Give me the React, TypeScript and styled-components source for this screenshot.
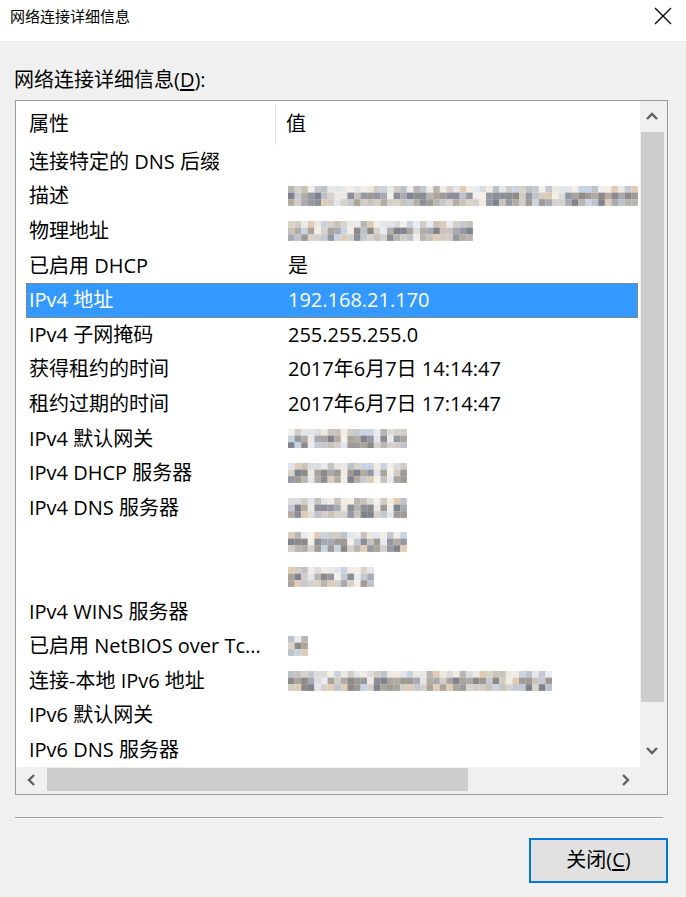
import React from "react";
import styled, { createGlobalStyle } from "styled-components";

const Global = createGlobalStyle`
  html, body { margin: 0; padding: 0; background: #f0f0f0; }
  body { font-family: "Open Sans", "Noto Sans CJK SC", sans-serif; }
  * { box-sizing: border-box; }
`;

const FONT = `"Open Sans", "Noto Sans CJK SC", sans-serif`;

const Window = styled.div`
  width: 686px;
  height: 897px;
  display: flex;
  flex-direction: column;
  background: #f0f0f0;
  overflow: hidden;
`;

const TitleBar = styled.div`
  height: 41px;
  flex: none;
  background: #ffffff;
  display: flex;
  align-items: flex-start;
  justify-content: space-between;
  padding: 5px 14px 0 10px;
`;

const Title = styled.div`
  font-family: ${FONT};
  font-size: 15px;
  line-height: 22px;
  color: #000;
`;

const CloseBtn = styled.div`
  width: 18px;
  height: 18px;
  margin-top: 2px;
  display: flex;
`;

const Body = styled.div`
  flex: 1;
  display: flex;
  flex-direction: column;
  padding: 27px 18px 0 15px;
`;

const Label = styled.div`
  font-family: ${FONT};
  font-size: 20px;
  line-height: 24px;
  color: #000;
  height: 24px;
  margin-left: -1px;
  u { text-decoration: underline; text-underline-offset: 2px; }
`;

const ListBox = styled.div`
  margin-top: 8px;
  height: 695px;
  border: 1px solid #9a9a9a;
  background: #fff;
  display: grid;
  grid-template-columns: 1fr 27px;
  grid-template-rows: 1fr 27px;
`;

const Viewport = styled.div`
  overflow: hidden;
  background: #fff;
  display: flex;
  flex-direction: column;
`;

const HeaderRow = styled.div`
  height: 44px;
  flex: none;
  display: grid;
  grid-template-columns: 260px 1fr;
  font-family: ${FONT};
  font-size: 20px;
  line-height: 24px;
  color: #000;
`;

const HeaderCell = styled.div<{ $divider?: boolean }>`
  display: flex;
  align-items: center;
  padding: 0 0 1px 13px;
  margin: 3px 0 0;
  border-right: ${(p) => (p.$divider ? "1px solid #e5e5e5" : "none")};
  &:nth-child(2) { padding-left: 10px; }
`;

const Row = styled.div<{ $selected?: boolean }>`
  height: 34.6px;
  flex: none;
  display: grid;
  grid-template-columns: 261px 1fr;
  align-items: center;
  font-family: ${FONT};
  font-size: 20px;
  line-height: 24px;
  white-space: nowrap;
  color: ${(p) => (p.$selected ? "#fff" : "#000")};
  background: ${(p) => (p.$selected ? "#3399ff" : "transparent")};
  border: 1px dotted ${(p) => (p.$selected ? "#c4742c" : "transparent")};
  margin: 0 2px 0 10px;
  padding-bottom: 1px;
`;

const Cell = styled.div`
  padding-left: 2px;
  display: flex;
  align-items: center;
`;

const ValueCell = styled(Cell)`
  padding-left: 0;
  min-width: 0;
`;

const VScroll = styled.div`
  background: #f0f0f0;
  display: flex;
  flex-direction: column;
`;

const VArrow = styled.div<{ $h: number }>`
  height: ${(p) => p.$h}px;
  flex: none;
  display: flex;
  align-items: center;
  justify-content: center;
  padding-right: 3px;
`;

const VTrack = styled.div`
  flex: 1;
  padding: 0 3px 0 1px;
  display: flex;
  flex-direction: column;
`;

const VThumb = styled.div`
  height: 570px;
  background: #cdcdcd;
`;

const HScroll = styled.div`
  background: #f0f0f0;
  display: flex;
`;

const HArrow = styled.div`
  width: 30px;
  flex: none;
  display: flex;
  align-items: center;
  justify-content: center;
  padding-bottom: 2px;
`;

const HTrack = styled.div`
  flex: 1;
  padding: 1px 0 3px 1px;
  display: flex;
`;

const HThumb = styled.div`
  width: 421px;
  background: #cdcdcd;
`;

const Corner = styled.div`
  background: #f0f0f0;
`;

const Separator = styled.div`
  margin: 22px 5px 0 0;
  height: 2px;
  border-top: 1px solid #a0a0a0;
  border-bottom: 1px solid #ffffff;
`;

const ButtonRow = styled.div`
  display: flex;
  justify-content: flex-end;
  margin-top: 19px;
`;

const Button = styled.div`
  width: 139px;
  height: 45px;
  border: 2px solid #0078d7;
  background: #e1e1e1;
  display: flex;
  align-items: center;
  justify-content: center;
  font-family: ${FONT};
  font-size: 20px;
  line-height: 24px;
  color: #000;
  padding-bottom: 2px;
  u { text-decoration: underline; text-underline-offset: 2px; }
`;

/* pixelated (mosaic) value — a picture of blurred text */
const lightPal = ["#ece8e2", "#e2e6ec", "#f2ece4", "#dcdcdc", "#e8ecf2", "#f4efe8"];
const darkPal = ["#8f8a88", "#a09a94", "#7e838e", "#aaa49c", "#9398a2", "#b3aca2", "#8c8f97", "#a7aab2"];
const midPal = ["#c8c2ba", "#bcc2ca", "#d2ccc4", "#b9b5b1", "#c4c8d0", "#d8d2c8", "#e0cbb4", "#c6d4e4"];

function rng(seed: number) {
  let s = seed;
  return () => {
    s = (s * 1103515245 + 12345) & 0x7fffffff;
    return s / 0x7fffffff;
  };
}

const Mosaic: React.FC<{ cells: number; seed: number; gaps?: number[] }> = ({ cells, seed, gaps = [] }) => {
  const r = rng(seed);
  const size = 6.6;
  const rects: React.ReactNode[] = [];
  for (let c = 0; c < cells; c++) {
    const gap = gaps.includes(c);
    for (let row = 0; row < 3; row++) {
      let color: string;
      if (gap) {
        color = row === 2 && r() > 0.5 ? "#d4d0cc" : lightPal[Math.floor(r() * lightPal.length)];
      } else if (row === 0) {
        color = r() > 0.45 ? midPal[Math.floor(r() * midPal.length)] : lightPal[Math.floor(r() * lightPal.length)];
      } else if (row === 1) {
        color = r() > 0.2 ? darkPal[Math.floor(r() * darkPal.length)] : midPal[Math.floor(r() * midPal.length)];
      } else {
        color = r() > 0.45 ? midPal[Math.floor(r() * midPal.length)] : darkPal[Math.floor(r() * darkPal.length)];
      }
      rects.push(<rect key={`${c}-${row}`} x={c * size} y={row * size} width={size + 0.1} height={size + 0.1} fill={color} />);
    }
  }
  return (
    <svg width={cells * size} height={3 * size} style={{ display: "block", flex: "none" }}>
      {rects}
    </svg>
  );
};

const Chevron: React.FC<{ dir: "up" | "down" | "left" | "right" }> = ({ dir }) => {
  const pts: Record<string, string> = {
    up: "2,8 7,3 12,8",
    down: "2,3 7,8 12,3",
    left: "7,1 2,6 7,11",
    right: "2,1 7,6 2,11",
  };
  const vertical = dir === "up" || dir === "down";
  return (
    <svg width={vertical ? 14 : 9} height={vertical ? 11 : 12} viewBox={vertical ? "0 0 14 11" : "0 0 9 12"}>
      <polyline points={pts[dir]} fill="none" stroke="#606060" strokeWidth={2.4} />
    </svg>
  );
};

type RowData = { k: string; v?: string; m?: { cells: number; seed: number; gaps?: number[] }; sel?: boolean };

const rows: RowData[] = [
  { k: "连接特定的 DNS 后缀" },
  { k: "描述", m: { cells: 53, seed: 11, gaps: [7, 8, 15, 28, 29, 40, 41] } },
  { k: "物理地址", m: { cells: 28, seed: 23, gaps: [4, 9, 14, 19] } },
  { k: "已启用 DHCP", v: "是" },
  { k: "IPv4 地址", v: "192.168.21.170", sel: true },
  { k: "IPv4 子网掩码", v: "255.255.255.0" },
  { k: "获得租约的时间", v: "2017年6月7日 14:14:47" },
  { k: "租约过期的时间", v: "2017年6月7日 17:14:47" },
  { k: "IPv4 默认网关", m: { cells: 18, seed: 41, gaps: [3, 8, 13, 15] } },
  { k: "IPv4 DHCP 服务器", m: { cells: 18, seed: 53, gaps: [3, 8, 13, 15] } },
  { k: "IPv4 DNS 服务器", m: { cells: 18, seed: 67, gaps: [3, 8, 13, 15] } },
  { k: "", m: { cells: 18, seed: 79, gaps: [3, 9, 14] } },
  { k: "", m: { cells: 13, seed: 83, gaps: [3, 7, 10] } },
  { k: "IPv4 WINS 服务器" },
  { k: "已启用 NetBIOS over Tc...", m: { cells: 3, seed: 97 } },
  { k: "连接-本地 IPv6 地址", m: { cells: 40, seed: 101, gaps: [4, 5, 12, 20, 33] } },
  { k: "IPv6 默认网关" },
  { k: "IPv6 DNS 服务器" },
];

export default function App() {
  return (
    <>
      <Global />
      <Window>
        <TitleBar>
          <Title>网络连接详细信息</Title>
          <CloseBtn>
            <svg width="18" height="18" viewBox="0 0 18 18">
              <path d="M1 1 L17 17 M17 1 L1 17" stroke="#000" strokeWidth="1.3" fill="none" />
            </svg>
          </CloseBtn>
        </TitleBar>
        <Body>
          <Label>
            网络连接详细信息(<u>D</u>):
          </Label>
          <ListBox>
            <Viewport>
              <HeaderRow>
                <HeaderCell $divider>属性</HeaderCell>
                <HeaderCell>值</HeaderCell>
              </HeaderRow>
              {rows.map((r, i) => (
                <Row key={i} $selected={r.sel}>
                  <Cell>{r.k}</Cell>
                  <ValueCell>{r.m ? <Mosaic {...r.m} /> : r.v}</ValueCell>
                </Row>
              ))}
            </Viewport>
            <VScroll>
              <VArrow $h={31}>
                <Chevron dir="up" />
              </VArrow>
              <VTrack>
                <VThumb />
              </VTrack>
              <VArrow $h={33}>
                <Chevron dir="down" />
              </VArrow>
            </VScroll>
            <HScroll>
              <HArrow>
                <Chevron dir="left" />
              </HArrow>
              <HTrack>
                <HThumb />
              </HTrack>
              <HArrow>
                <Chevron dir="right" />
              </HArrow>
            </HScroll>
            <Corner />
          </ListBox>
          <Separator />
          <ButtonRow>
            <Button>
              关闭(<u>C</u>)
            </Button>
          </ButtonRow>
        </Body>
      </Window>
    </>
  );
}
